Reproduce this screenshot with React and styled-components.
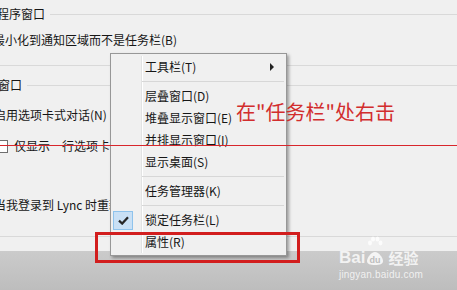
import React from "react";
import styled, { createGlobalStyle } from "styled-components";

const Global = createGlobalStyle`
  html, body { margin: 0; padding: 0; }
  body {
    width: 457px; height: 290px; overflow: hidden;
    background: #f0f0f0;
    font-family: "Noto Sans CJK SC", "Noto Sans", sans-serif;
  }
`;

const Stage = styled.div`
  position: relative;
  width: 457px;
  height: 290px;
  overflow: hidden;
  display: flex;
  flex-direction: column;
  background: #f0f0f0;
`;

const Panel = styled.div`
  height: 251px;
  display: flex;
  flex-direction: column;
  color: #161616;
  font-size: 12px;
`;

const GroupHeader = styled.div`
  height: ${(p) => p.$h}px;
  display: flex;
  align-items: center;
  margin-left: ${(p) => p.$indent}px;
  white-space: nowrap;
  line-height: 14px;
`;

const Rule = styled.div`
  flex: 1;
  height: 1px;
  background: #d9d9d9;
  margin-left: 5px;
  margin-top: 1px;
`;

const OptionRow = styled.div`
  height: ${(p) => p.$h}px;
  margin-top: ${(p) => p.$mt || 0}px;
  display: flex;
  align-items: center;
  margin-left: ${(p) => p.$indent}px;
  white-space: nowrap;
  line-height: 14px;
`;

const Box = styled.span`
  width: 11px;
  height: 11px;
  border: 1px solid #6f6f6f;
  background: #fff;
  margin-right: 6px;
  flex: none;
`;

const Divider = styled.div`
  height: 1px;
  margin-top: ${(p) => p.$mt}px;
  background: #d9d9d9;
`;

const Footer = styled.div`
  flex: 1;
  background: linear-gradient(#cbcbcb, #bdbdbd);
`;

const Menu = styled.div`
  position: absolute;
  left: 110px;
  top: 53px;
  width: 177px;
  box-sizing: border-box;
  border: 1px solid #979797;
  padding: 2px;
  background: #f0f0f0;
  box-shadow: 2px 2px 3px rgba(0, 0, 0, 0.35);
  color: #161616;
  font-size: 12px;
`;

const MenuList = styled.div`
  display: flex;
  flex-direction: column;
  background: linear-gradient(
    to right,
    #f0f0f0 0 28px,
    #e2e3e3 28px 29px,
    #ffffff 29px 30px,
    #f0f0f0 30px
  );
`;

const Item = styled.div`
  height: 22px;
  display: flex;
  align-items: center;
  line-height: 14px;
  white-space: nowrap;
`;

const IconCell = styled.div`
  width: 28px;
  height: 22px;
  display: flex;
  align-items: center;
  justify-content: flex-start;
  flex: none;
`;

const CheckBg = styled.div`
  width: 20px;
  height: 19px;
  box-sizing: border-box;
  border: 1px solid #8fc3ec;
  background: #c9e0f5;
  display: flex;
  align-items: center;
  justify-content: center;
`;

const Label = styled.span`
  flex: 1;
  padding-left: 4px;
`;

const Arrow = styled.span`
  width: 0;
  height: 0;
  border-top: 4px solid transparent;
  border-bottom: 4px solid transparent;
  border-left: 4px solid #222;
  margin-right: 10px;
`;

const Separator = styled.div`
  height: 7px;
  display: flex;
  align-items: center;
  padding-left: 29px;
  &::after {
    content: "";
    flex: 1;
    height: 1px;
    background: #d7d7d7;
  }
`;

const RedLine = styled.div`
  position: absolute;
  left: 0;
  right: 0;
  top: 145px;
  height: 1px;
  background: #d8262c;
`;

const Note = styled.div`
  position: absolute;
  left: 236px;
  top: 99px;
  font-size: 20px;
  line-height: 26px;
  color: #d22d2d;
  white-space: nowrap;
`;

const Highlight = styled.div`
  position: absolute;
  left: 95px;
  top: 232px;
  width: 205px;
  height: 31px;
  box-sizing: border-box;
  border: 3px solid #d21e1e;
`;

const Watermark = styled.div`
  position: absolute;
  left: 339px;
  top: 236px;
  display: flex;
  flex-direction: column;
  align-items: flex-start;
  color: rgba(255, 255, 255, 0.78);
`;

const Brand = styled.div`
  display: flex;
  align-items: flex-end;
  height: 30px;
  font-family: "Liberation Sans", sans-serif;
  font-weight: bold;
  font-size: 17px;
  line-height: 17px;
`;

const Paw = styled.span`
  width: 18px;
  height: 30px;
  margin: 0 2px 0 1px;
  display: flex;
  flex-direction: column;
  align-items: center;
  justify-content: flex-end;
`;

const Jingyan = styled.span`
  font-family: "Noto Sans CJK SC", sans-serif;
  font-weight: bold;
  font-size: 15px;
  line-height: 17px;
  margin-left: 2px;
`;

const Url = styled.div`
  font-family: "Liberation Sans", sans-serif;
  font-size: 10px;
  line-height: 12px;
  margin-top: 3px;
  letter-spacing: 0.2px;
`;

const items = [
  { label: "工具栏(T)", arrow: true },
  "sep",
  { label: "层叠窗口(D)" },
  { label: "堆叠显示窗口(E)" },
  { label: "并排显示窗口(I)" },
  { label: "显示桌面(S)" },
  "sep",
  { label: "任务管理器(K)" },
  "sep",
  { label: "锁定任务栏(L)", checked: true },
  { label: "属性(R)" },
];

export default function App() {
  return (
    <>
      <Global />
      <Stage>
        <Panel>
          <GroupHeader $h={28} $indent={-3}>
            程序窗口
            <Rule />
          </GroupHeader>
          <OptionRow $h={24} $indent={-7}>
            最小化到通知区域而不是任务栏(B)
          </OptionRow>
          <Divider $mt={13} />
          <GroupHeader $h={38} $indent={-2}>
            窗口
            <Rule />
          </GroupHeader>
          <OptionRow $h={22} $indent={-6}>
            启用选项卡式对话(N)
          </OptionRow>
          <OptionRow $h={40} $indent={-5}>
            <Box />
            仅显示一行选项卡(N)
          </OptionRow>
          <OptionRow $h={22} $mt={28} $indent={-6}>
            当我登录到 Lync 时重新打开会话
          </OptionRow>
          <Divider $mt={20} />
        </Panel>
        <Footer />

        <Menu>
          <MenuList>
            {items.map((it, i) =>
              it === "sep" ? (
                <Separator key={i} />
              ) : (
                <Item key={i}>
                  <IconCell>
                    {it.checked && (
                      <CheckBg>
                        <svg width="11" height="9" viewBox="0 0 11 9">
                          <path
                            d="M1 4.6 L4.2 7.6 L10 1.2"
                            fill="none"
                            stroke="#262626"
                            strokeWidth="2.2"
                          />
                        </svg>
                      </CheckBg>
                    )}
                  </IconCell>
                  <Label>{it.label}</Label>
                  {it.arrow && <Arrow />}
                </Item>
              )
            )}
          </MenuList>
        </Menu>

        <RedLine />
        <Note>在"任务栏"处右击</Note>
        <Highlight />

        <Watermark>
          <Brand>
            Bai
            <Paw>
              <svg width="16" height="14" viewBox="0 0 16 14" style={{ marginBottom: 1 }}>
                <ellipse cx="3" cy="7" rx="2" ry="2.4" fill="rgba(255,255,255,0.8)" />
                <ellipse cx="6" cy="3" rx="2" ry="2.6" fill="rgba(255,255,255,0.8)" />
                <ellipse cx="10.5" cy="3" rx="2" ry="2.6" fill="rgba(255,255,255,0.8)" />
                <ellipse cx="13.5" cy="7" rx="2" ry="2.4" fill="rgba(255,255,255,0.8)" />
              </svg>
              <svg width="18" height="15" viewBox="0 0 18 15">
                <path
                  d="M9 1 C13 1 17 7 17 10 C17 13 14 14 9 14 C4 14 1 13 1 10 C1 7 5 1 9 1 Z"
                  fill="rgba(255,255,255,0.8)"
                />
                <text x="9" y="12" textAnchor="middle" fontSize="9" fontWeight="bold" fontFamily="Liberation Sans" fill="#bdbdbd">du</text>
              </svg>
            </Paw>
            <Jingyan>经验</Jingyan>
          </Brand>
          <Url>jingyan.baidu.com</Url>
        </Watermark>
      </Stage>
    </>
  );
}
